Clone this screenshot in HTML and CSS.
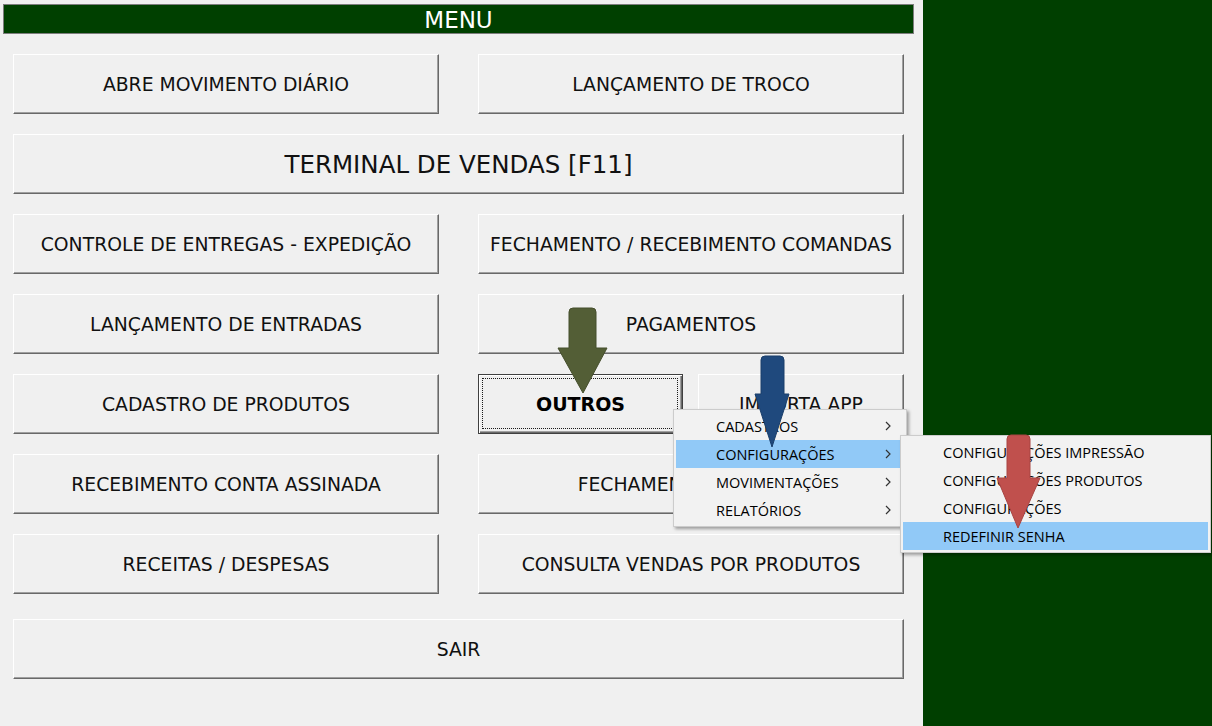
FILE: index.html
```html
<!DOCTYPE html>
<html lang="pt-BR">
<head>
<meta charset="utf-8">
<title>MENU</title>
<link rel="stylesheet" href="styles.css">
</head>
<body>
<div class="app">
  <div class="panel">
    <div class="header">MENU</div>
    <div class="buttons">
      <div class="btn">ABRE MOVIMENTO DIÁRIO</div>
      <div class="btn">LANÇAMENTO DE TROCO</div>
      <div class="btn wide big">TERMINAL DE VENDAS [F11]</div>
      <div class="btn">CONTROLE DE ENTREGAS - EXPEDIÇÃO</div>
      <div class="btn">FECHAMENTO / RECEBIMENTO COMANDAS</div>
      <div class="btn">LANÇAMENTO DE ENTRADAS</div>
      <div class="btn">PAGAMENTOS</div>
      <div class="btn">CADASTRO DE PRODUTOS</div>
      <div class="split">
        <div class="btn focused">OUTROS</div>
        <div class="btn">IMPORTA APP</div>
      </div>
      <div class="btn">RECEBIMENTO CONTA ASSINADA</div>
      <div class="btn">FECHAMENTO DE CAIXA</div>
      <div class="btn">RECEITAS / DESPESAS</div>
      <div class="btn">CONSULTA VENDAS POR PRODUTOS</div>
    </div>
    <div class="btn sair">SAIR</div>
  </div>
  <div class="side"></div>
</div>

<div class="menu menu-main">
  <div class="item">CADASTROS<svg class="chev" width="6" height="10" viewBox="0 0 6 10"><polyline points="1,1 5,5 1,9" fill="none" stroke="#333" stroke-width="1.2"/></svg></div>
  <div class="item active">CONFIGURAÇÕES<svg class="chev" width="6" height="10" viewBox="0 0 6 10"><polyline points="1,1 5,5 1,9" fill="none" stroke="#333" stroke-width="1.2"/></svg></div>
  <div class="item">MOVIMENTAÇÕES<svg class="chev" width="6" height="10" viewBox="0 0 6 10"><polyline points="1,1 5,5 1,9" fill="none" stroke="#333" stroke-width="1.2"/></svg></div>
  <div class="item">RELATÓRIOS<svg class="chev" width="6" height="10" viewBox="0 0 6 10"><polyline points="1,1 5,5 1,9" fill="none" stroke="#333" stroke-width="1.2"/></svg></div>
</div>

<div class="menu menu-sub">
  <div class="item">CONFIGURAÇÕES IMPRESSÃO</div>
  <div class="item">CONFIGURAÇÕES PRODUTOS</div>
  <div class="item">CONFIGURAÇÕES</div>
  <div class="item active">REDEFINIR SENHA</div>
</div>

<svg class="arrows" width="1212" height="726" viewBox="0 0 1212 726">
  <path d="M569 312 Q569 308 573 308 L592 308 Q596 308 596 312 L596 348 L607 348 L583 393 L558 348 L569 348 Z" fill="#535e36" stroke="#454e2c" stroke-width="1"/>
  <path d="M761 360 Q761 356 765 356 L780 356 Q784 356 784 360 L784 394 L789 394 L772 447 L755 394 L761 394 Z" fill="#1f497d" stroke="#1a3e6a" stroke-width="1"/>
  <path d="M1007 439 Q1007 435 1011 435 L1026 435 Q1030 435 1030 439 L1030 478 L1040 478 L1018 528 L997 478 L1007 478 Z" fill="#c0504d" stroke="#a84442" stroke-width="1"/>
</svg>
</body>
</html>
```

FILE: styles.css
```css
* { box-sizing: border-box; }
html, body { margin: 0; padding: 0; }
body {
  width: 1212px;
  height: 726px;
  overflow: hidden;
  font-family: "DejaVu Sans", Verdana, sans-serif;
  background: #f0f0f0;
}
.app {
  display: flex;
  height: 726px;
}
.panel {
  width: 923px;
  flex: none;
  background: #f0f0f0;
  padding-top: 4px;
}
.side {
  flex: 1;
  background: #003f00;
}
.header {
  margin-left: 3px;
  width: 911px;
  height: 30px;
  background: #004000;
  border: 1px solid #7d7d7d;
  color: #ffffff;
  font-size: 23px;
  line-height: 30px;
  text-align: center;
}
.buttons {
  margin: 20px 0 0 13px;
  width: 891px;
  display: grid;
  grid-template-columns: 426px 426px;
  column-gap: 39px;
  row-gap: 20px;
  grid-auto-rows: 60px;
}
.btn {
  position: relative;
  display: flex;
  align-items: center;
  justify-content: center;
  background: #f0f0f0;
  color: #111111;
  font-size: 18.8px;
  border-style: solid;
  border-width: 1px;
  border-color: #ffffff #696969 #696969 #ffffff;
  box-shadow: inset -1px -1px 0 #a0a0a0;
  white-space: nowrap;
}
.wide { grid-column: 1 / span 2; }
.big { font-size: 24.5px; }
.sair {
  margin: 25px 0 0 13px;
  width: 891px;
  height: 60px;
}
.split {
  display: flex;
  gap: 15px;
}
.split .btn { flex: 1; }
.split .focused { flex: 0 0 205px; }
.focused {
  font-weight: bold;
  font-size: 19px;
  border-color: #404040;
  box-shadow: inset 1px 1px 0 #ffffff, inset -1px -1px 0 #696969, inset -2px -2px 0 #a0a0a0;
  color: #000;
}
.focused::after {
  content: "";
  position: absolute;
  left: 3px;
  top: 3px;
  right: 4px;
  bottom: 4px;
  border: 1px dotted #1a1a1a;
}
.menu {
  position: absolute;
  background: #f2f2f2;
  border: 1px solid #cccccc;
  padding: 2px;
  box-shadow: 2px 2px 3px rgba(0, 0, 0, 0.35);
  font-family: "Open Sans", "Noto Sans", sans-serif;
  font-size: 14.5px;
  color: #000;
}
.menu-main {
  left: 673px;
  top: 409px;
  width: 234px;
}
.menu-sub {
  left: 900px;
  top: 435px;
  width: 311px;
}
.item {
  height: 28px;
  display: flex;
  align-items: center;
  justify-content: space-between;
  padding-left: 40px;
  padding-right: 13px;
  white-space: nowrap;
}
.item.active { background: #91c9f7; }
.chev { display: block; }
.arrows {
  position: absolute;
  left: 0;
  top: 0;
  pointer-events: none;
}
```
